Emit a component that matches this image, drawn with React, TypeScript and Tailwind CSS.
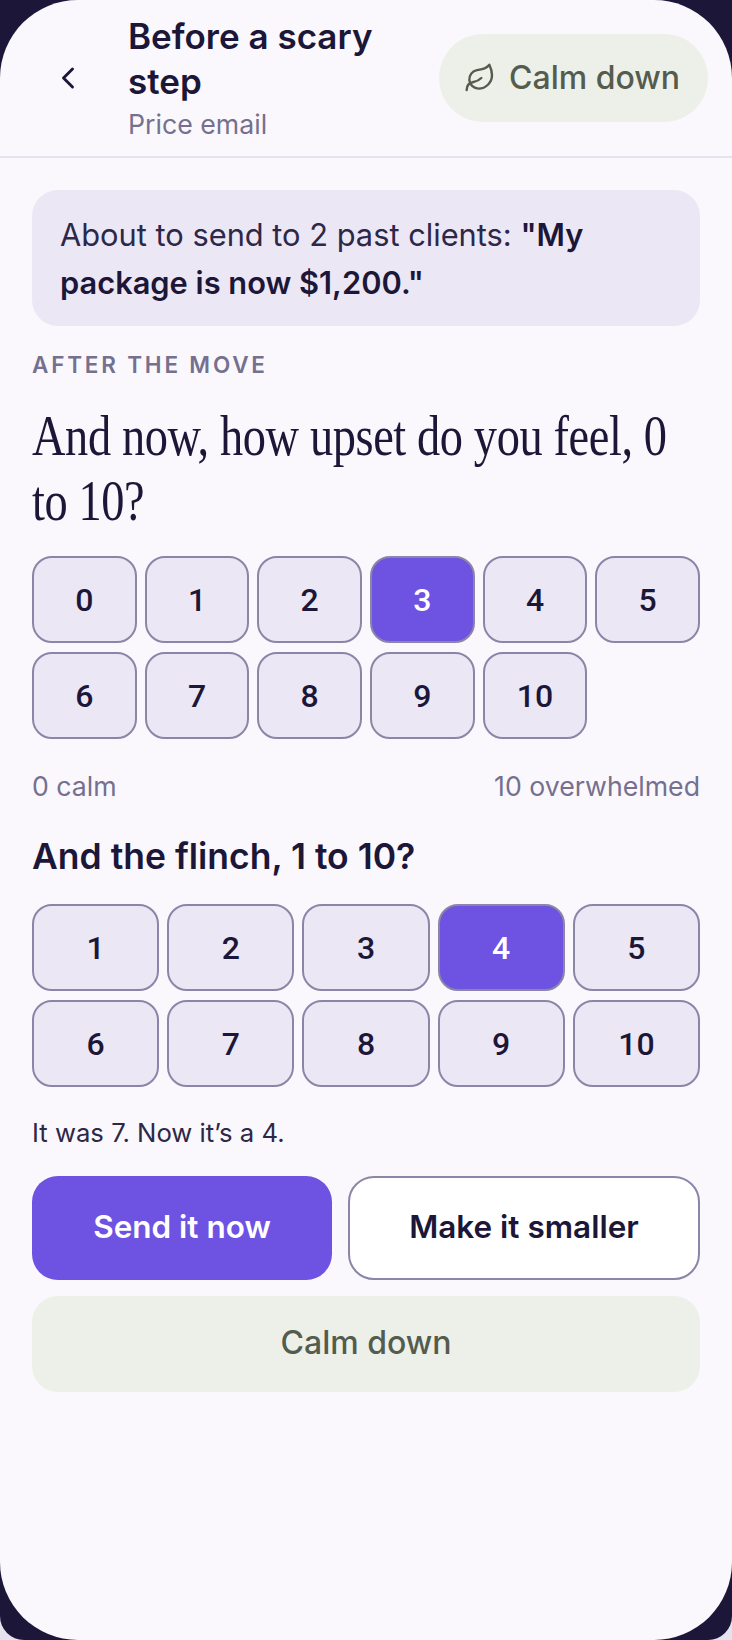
import { ChevronLeft, Leaf } from "lucide-react";

const sans = "font-['Inter','Noto_Sans',sans-serif]";

function ScoreButton({ value, selected }: { value: number; selected: boolean }) {
  return (
    <button
      className={`h-[87px] rounded-[20px] border-2 border-[#8b86a8] font-['Roboto',sans-serif] text-[32px] font-medium ${
        selected ? "bg-[#6e52e2] text-white" : "bg-[#ece7f5] text-[#1c1738]"
      }`}
    >
      {value}
    </button>
  );
}

export default function App() {
  const upset = [0, 1, 2, 3, 4, 5, 6, 7, 8, 9, 10];
  const flinch = [1, 2, 3, 4, 5, 6, 7, 8, 9, 10];

  return (
    <div className="h-[1640px] w-[732px] overflow-hidden bg-[#e6e3ee]">
      <div className="h-full rounded-b-[24px] bg-[#1c1738]">
        <div className={`flex h-full flex-col rounded-[78px] bg-[#faf8fc] ${sans}`}>
          <header className="flex h-[158px] shrink-0 items-center border-b-2 border-[#e6e3ee] pl-[50px] pr-6">
            <ChevronLeft className="size-9 shrink-0 text-[#1c1738]" strokeWidth={1.9} />
            <div className="ml-[42px] flex-1">
              <h1 className="text-[35px] leading-[45px] font-semibold text-[#1c1738]">
                Before a scary step
              </h1>
              <p className="pt-px text-[26.7px] leading-[38px] text-[#75708f]">Price email</p>
            </div>
            <div className="flex h-[88px] shrink-0 items-center gap-[13px] rounded-full bg-[#edf0e9] pl-[25px] pr-7 text-[32px] font-medium text-[#545c4e]">
              <Leaf className="size-8" strokeWidth={1.8} />
              Calm down
            </div>
          </header>

          <main className="flex flex-col px-8 pt-8">
            <div className="rounded-[26px] bg-[#ece7f5] px-7 pt-[21px] pb-[19px] text-[30.8px] leading-[48px] text-[#2d2748]">
              About to send to 2 past clients:{" "}
              <span className="font-semibold text-[#1c1738]">"My package is now $1,200."</span>
            </div>

            <div className="mt-[26px] text-[22.5px] leading-[26px] font-semibold tracking-[2.8px] text-[#75708f]">
              AFTER THE MOVE
            </div>
            {/* condensed display serif isn't installed, squeeze Liberation Serif instead */}
            <h2 className="mt-[25px] w-[825px] origin-left scale-x-[0.8] font-['Liberation_Serif',serif] text-[58px] leading-[65px] tracking-[-0.5px] text-[#1c1738]">
              And now, how upset do you feel, 0 to 10?
            </h2>

            <div className="mt-[23px] grid grid-cols-6 gap-x-2 gap-y-[9px]">
              {upset.map((n) => (
                <ScoreButton key={n} value={n} selected={n === 3} />
              ))}
            </div>

            <div className="mt-[30px] flex justify-between text-[26.7px] leading-[34px] text-[#75708f]">
              <span>0 calm</span>
              <span>10 overwhelmed</span>
            </div>

            <h3 className="mt-[32px] text-[35.5px] leading-[44px] font-semibold text-[#1c1738]">
              And the flinch, 1 to 10?
            </h3>

            <div className="mt-[25px] grid grid-cols-5 gap-x-2 gap-y-[9px]">
              {flinch.map((n) => (
                <ScoreButton key={n} value={n} selected={n === 4} />
              ))}
            </div>

            <p className="mt-[29px] text-[25.7px] leading-[34px] text-[#2d2748]">It was 7. Now it’s a 4.</p>

            <div className="mt-[26px] flex gap-4">
              <button className="h-[104px] w-[300px] shrink-0 rounded-[26px] bg-[#6e52e2] pb-[2px] text-[31.5px] font-semibold text-white">
                Send it now
              </button>
              <button className="h-[104px] flex-1 rounded-[26px] border-2 border-[#8b86a8] bg-white pb-[2px] text-[31.5px] font-semibold text-[#1c1738]">
                Make it smaller
              </button>
            </div>
            <button className="mt-4 h-[96px] rounded-[26px] bg-[#edf0e9] pb-[2px] text-[32px] font-medium text-[#545c4e]">
              Calm down
            </button>
          </main>
        </div>
      </div>
    </div>
  );
}
